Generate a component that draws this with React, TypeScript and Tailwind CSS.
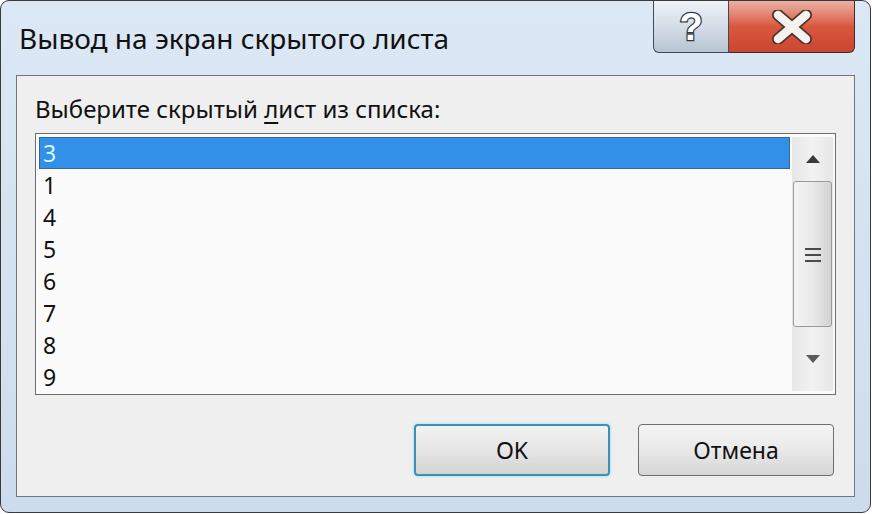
import React from "react";

const items = ["3", "1", "4", "5", "6", "7", "8", "9"];

function HelpButton() {
    return (
        <div className="w-[76px] h-[52px] border border-t-0 border-[#3e4a58] rounded-bl-[6px] bg-gradient-to-b from-[#eef2f7] via-[#d5dde7] to-[#b8c4d2] flex items-center justify-center">
            <svg width="30" height="40" viewBox="0 0 30 40">
                <text
                    x="15"
                    y="33"
                    textAnchor="middle"
                    fontFamily="'Liberation Sans', sans-serif"
                    fontWeight="bold"
                    fontSize="38"
                    fill="#ffffff"
                    stroke="#2f3a46"
                    strokeWidth="2.5"
                    paintOrder="stroke"
                >
                    ?
                </text>
            </svg>
        </div>
    );
}

function CloseButton() {
    return (
        <div className="w-[126px] h-[52px] border border-t-0 border-l-0 border-[#3e2a26] rounded-br-[6px] bg-gradient-to-b from-[#eab1a5] via-[#d9573f] to-[#c9462f] flex items-center justify-center">
            <svg width="44" height="34" viewBox="0 0 44 34">
                <path
                    d="M8 5 L36 29 M36 5 L8 29"
                    stroke="#4a3430"
                    strokeWidth="12"
                    strokeLinecap="round"
                />
                <path
                    d="M8 5 L36 29 M36 5 L8 29"
                    stroke="#f4f1ef"
                    strokeWidth="8.5"
                    strokeLinecap="round"
                />
            </svg>
        </div>
    );
}

function Scrollbar() {
    return (
        <div className="w-[41px] flex flex-col bg-gradient-to-r from-[#e6e6e6] via-[#f2f2f2] to-[#e6e6e6]">
            <div className="h-[44px] flex items-center justify-center">
                <svg width="16" height="10" viewBox="0 0 16 10">
                    <path d="M8 1 L15 9 L1 9 Z" fill="#3a3a3a" />
                </svg>
            </div>
            <div className="mx-[1px] h-[146px] border border-[#9a9a9a] rounded-[3px] bg-gradient-to-r from-[#f4f4f4] via-[#e9e9e9] to-[#d2d2d2] flex items-center justify-center">
                <div className="flex flex-col gap-[4px] mt-[2px]">
                    <div className="w-[16px] h-[2px] bg-[#4a4a4a]" />
                    <div className="w-[16px] h-[2px] bg-[#4a4a4a]" />
                    <div className="w-[16px] h-[2px] bg-[#4a4a4a]" />
                </div>
            </div>
            <div className="flex-1 flex items-center justify-center">
                <svg width="16" height="10" viewBox="0 0 16 10">
                    <path d="M1 1 L15 1 L8 9 Z" fill="#5a5a5a" />
                </svg>
            </div>
        </div>
    );
}

export default function App() {
    return (
        <div
            className="w-[872px] h-[514px] bg-white"
            style={{ fontFamily: "'Noto Sans', 'Open Sans', sans-serif" }}
        >
            <div className="w-[871px] h-[513px] rounded-[9px] border border-[#3a3a3a] bg-gradient-to-b from-[#dce8f5] to-[#cddcec] flex flex-col">
                <div className="h-[74px] flex items-start">
                    <div className="pl-[18px] pt-[18px] text-[28px] leading-[38px] text-[#111]">
                        Вывод на экран скрытого листа
                    </div>
                    <div className="ml-auto mr-[15px] flex">
                        <HelpButton />
                        <CloseButton />
                    </div>
                </div>

                <div className="mx-[15px] h-[422px] border border-[#6f7782] bg-[#efefef] flex flex-col px-[18px]">
                    <div className="pt-[18px] text-[24px] leading-[30px] text-[#111]">
                        Выберите скрытый <span className="underline underline-offset-[4px]">л</span>ист из списка:
                    </div>

                    <div className="mt-[9px] w-[801px] h-[262px] border border-[#6e6e6e] bg-[#fbfbfb] flex p-[3px] pr-[2px]">
                        <div className="flex-1 flex flex-col">
                            {items.map((it, i) => (
                                <div
                                    key={it}
                                    className={
                                        i === 0
                                            ? "h-[32px] pl-[3px] flex items-center text-[23px] bg-[#3390e8] text-[#d8f4ff] border border-[#3a6594] mr-[2px]"
                                            : "h-[32px] pl-[4px] flex items-center text-[23px] text-[#111]"
                                    }
                                >
                                    {it}
                                </div>
                            ))}
                        </div>
                        <Scrollbar />
                    </div>

                    <div className="mt-[29px] flex justify-end gap-[28px] pr-[2px]">
                        <div className="w-[196px] h-[52px] rounded-[4px] border-2 border-[#3d8fb4] shadow-[0_0_3px_#8fd3f0] bg-gradient-to-b from-[#f2f2f2] via-[#e6e6e6] to-[#d3d3d3] flex items-center justify-center text-[23px] text-[#111]">
                            OK
                        </div>
                        <div className="w-[196px] h-[52px] rounded-[4px] border border-[#6f6f6f] bg-gradient-to-b from-[#f4f4f4] via-[#e9e9e9] to-[#d6d6d6] flex items-center justify-center text-[23px] text-[#111]">
                            Отмена
                        </div>
                    </div>
                </div>
            </div>
        </div>
    );
}
